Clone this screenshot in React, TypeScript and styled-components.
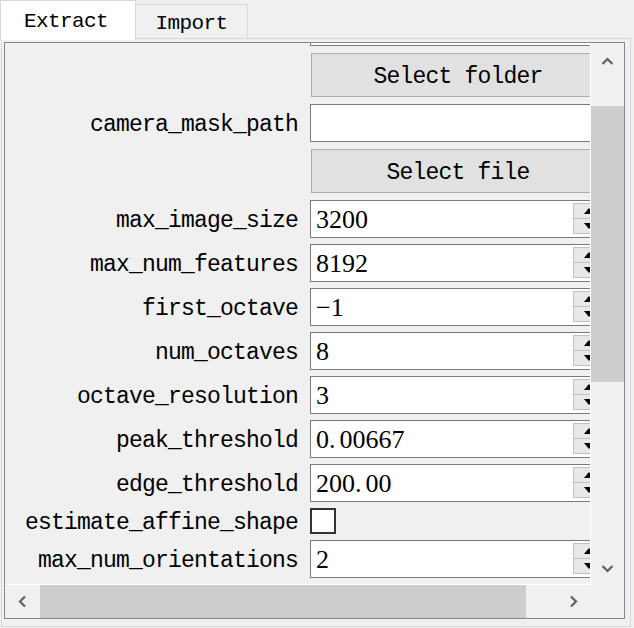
import React from 'react';
import styled, { createGlobalStyle } from 'styled-components';

type Row =
  | { kind: 'input'; label: string; value?: string }
  | { kind: 'button'; text: string }
  | { kind: 'spin'; label: string; value: string }
  | { kind: 'check'; label: string };

// the list is scrolled a little, so the first field sits mostly above the viewport
const rows: Row[] = [
  { kind: 'input', label: 'mask_path' },
  { kind: 'button', text: 'Select folder' },
  { kind: 'input', label: 'camera_mask_path' },
  { kind: 'button', text: 'Select file' },
  { kind: 'spin', label: 'max_image_size', value: '3200' },
  { kind: 'spin', label: 'max_num_features', value: '8192' },
  { kind: 'spin', label: 'first_octave', value: '\u22121' },
  { kind: 'spin', label: 'num_octaves', value: '8' },
  { kind: 'spin', label: 'octave_resolution', value: '3' },
  { kind: 'spin', label: 'peak_threshold', value: '0.00667' },
  { kind: 'spin', label: 'edge_threshold', value: '200.00' },
  { kind: 'check', label: 'estimate_affine_shape' },
  { kind: 'spin', label: 'max_num_orientations', value: '2' },
  { kind: 'check', label: 'upright' },
];

const GlobalStyle = createGlobalStyle`
  html, body {
    margin: 0;
    padding: 0;
    background: #f0f0f0;
  }
  body {
    font-family: "Liberation Mono", "DejaVu Sans Mono", monospace;
    color: #000;
  }
`;

const Window = styled.div`
  width: 634px;
  height: 628px;
  overflow: hidden;
  background: #f0f0f0;
`;

const TabBar = styled.div`
  display: flex;
  align-items: flex-start;
  height: 38px;
`;

const Tab = styled.div<{ $active?: boolean }>`
  position: relative;
  z-index: 1;
  box-sizing: border-box;
  display: flex;
  align-items: center;
  justify-content: center;
  font-family: "Liberation Mono", monospace;
  font-size: 21px;
  line-height: 22px;
  letter-spacing: -0.6px;
  white-space: nowrap;
  border: 1px solid #d9d9d9;
  ${({ $active }) =>
    $active
      ? `
    width: 136px;
    height: 40px;
    border-bottom: none;
    background: #ffffff;
    padding: 3px 4px 0 0;
  `
      : `
    width: 112px;
    height: 35px;
    margin-top: 4px;
    border-left: none;
    background: #f0f0f0;
    padding-top: 4px;
  `}
`;

const Pane = styled.div`
  box-sizing: border-box;
  margin-left: 1px;
  width: 630px;
  height: 589px;
  border: 1px solid #d9d9d9;
  background: #f0f0f0;
  padding: 3px 0 0 2px;
`;

const ScrollFrame = styled.div`
  box-sizing: border-box;
  width: 621px;
  height: 577px;
  border: 1px solid #828790;
  display: grid;
  grid-template-columns: 586px 33px;
  grid-template-rows: 542px 33px;
`;

const Viewport = styled.div`
  box-sizing: border-box;
  overflow: hidden;
  background: #f0f0f0;
  border-right: 1px solid #ffffff;
  border-bottom: 1px solid #ffffff;
`;

const Form = styled.div`
  display: grid;
  grid-template-columns: 273px 296px;
  column-gap: 12px;
  row-gap: 6px;
  padding-left: 20px;
  margin-top: -35px;
  width: max-content;
`;

const Label = styled.div`
  display: flex;
  align-items: center;
  justify-content: flex-end;
  white-space: nowrap;
  font-size: 23px;
  line-height: 20px;
  letter-spacing: -0.8px;
  padding-top: 3px;
`;

const LineEdit = styled.div`
  box-sizing: border-box;
  height: 38px;
  border: 1px solid #7a7a7a;
  background: #ffffff;
  display: flex;
  align-items: center;
  padding-left: 5px;
  font-family: "Liberation Serif", "Times New Roman", serif;
  font-size: 26px;
  line-height: 26px;
  white-space: nowrap;
`;

const ValueText = styled.span`
  padding-top: 2px;
`;

const Dot = styled.span`
  margin-right: 4px;
`;

const SpinButtons = styled.div`
  box-sizing: border-box;
  margin-left: auto;
  align-self: stretch;
  width: 32px;
  display: flex;
  flex-direction: column;
  padding: 2px 0 3px;
`;

const SpinButton = styled.div`
  flex: 1;
  border: 1px solid #c2c2c2;
  background: #e8e8e8;
  display: flex;
  align-items: center;
  justify-content: center;
  & + & {
    margin-top: -1px;
  }
`;

const PushButton = styled.div`
  box-sizing: border-box;
  margin: 1px;
  height: 44px;
  border: 1px solid #adadad;
  background: #e1e1e1;
  display: flex;
  align-items: center;
  justify-content: center;
  font-size: 23px;
  line-height: 20px;
  letter-spacing: -0.8px;
  padding-top: 3px;
  white-space: nowrap;
`;

const CheckCell = styled.div`
  display: flex;
  align-items: center;
`;

const CheckBox = styled.div`
  box-sizing: border-box;
  width: 26px;
  height: 26px;
  border: 2px solid #333333;
  background: #ffffff;
`;

const VScroll = styled.div`
  display: flex;
  flex-direction: column;
  background: #f0f0f0;
`;

const HScroll = styled.div`
  display: flex;
  background: #f0f0f0;
`;

const ArrowButton = styled.div<{ $long: number; $vertical?: boolean }>`
  flex: none;
  display: flex;
  align-items: center;
  justify-content: center;
  ${({ $long, $vertical }) => ($vertical ? `height: ${$long}px;` : `width: ${$long}px;`)}
`;

const Track = styled.div<{ $vertical?: boolean }>`
  flex: 1;
  display: flex;
  flex-direction: ${({ $vertical }) => ($vertical ? 'column' : 'row')};
`;

const Thumb = styled.div<{ $offset: number; $size: number; $vertical?: boolean }>`
  flex: none;
  background: #cdcdcd;
  ${({ $offset, $size, $vertical }) =>
    $vertical
      ? `margin-top: ${$offset}px; height: ${$size}px;`
      : `margin-left: ${$offset}px; width: ${$size}px;`}
`;

const Corner = styled.div`
  background: #f0f0f0;
`;

const Chevron = ({ dir }: { dir: 'up' | 'down' | 'left' | 'right' }) => {
  const rot = { up: 0, right: 90, down: 180, left: 270 }[dir];
  return (
    <svg width="13" height="13" viewBox="0 0 13 13" style={{ transform: `rotate(${rot}deg)` }}>
      <polyline points="1.5,9 6.5,4 11.5,9" fill="none" stroke="#606060" strokeWidth="2.2" />
    </svg>
  );
};

const Triangle = ({ up }: { up?: boolean }) => (
  <svg width="10" height="6" viewBox="0 0 10 6">
    <polygon points={up ? '0,6 5,0 10,6' : '0,0 10,0 5,6'} fill="#000" />
  </svg>
);

const Value = ({ text }: { text: string }) => {
  const parts = text.split('.');
  if (parts.length === 1) return <ValueText>{text}</ValueText>;
  return (
    <ValueText>
      {parts[0]}
      <Dot>.</Dot>
      {parts[1]}
    </ValueText>
  );
};

const FormRow = ({ row }: { row: Row }) => {
  if (row.kind === 'button') {
    return (
      <>
        <Label />
        <PushButton>{row.text}</PushButton>
      </>
    );
  }
  if (row.kind === 'check') {
    return (
      <>
        <Label>{row.label}</Label>
        <CheckCell>
          <CheckBox />
        </CheckCell>
      </>
    );
  }
  if (row.kind === 'spin') {
    return (
      <>
        <Label>{row.label}</Label>
        <LineEdit>
          <Value text={row.value} />
          <SpinButtons>
            <SpinButton>
              <Triangle up />
            </SpinButton>
            <SpinButton>
              <Triangle />
            </SpinButton>
          </SpinButtons>
        </LineEdit>
      </>
    );
  }
  return (
    <>
      <Label>{row.label}</Label>
      <LineEdit>{row.value}</LineEdit>
    </>
  );
};

export default function App() {
  return (
    <>
      <GlobalStyle />
      <Window>
        <TabBar>
          <Tab $active>Extract</Tab>
          <Tab>Import</Tab>
        </TabBar>
        <Pane>
          <ScrollFrame>
            <Viewport>
              <Form>
                {rows.map((row, i) => (
                  <FormRow key={i} row={row} />
                ))}
              </Form>
            </Viewport>
            <VScroll>
              <ArrowButton $vertical $long={36}>
                <Chevron dir="up" />
              </ArrowButton>
              <Track $vertical>
                <Thumb $vertical $offset={27} $size={276} />
              </Track>
              <ArrowButton $vertical $long={33}>
                <Chevron dir="down" />
              </ArrowButton>
            </VScroll>
            <HScroll>
              <ArrowButton $long={35}>
                <Chevron dir="left" />
              </ArrowButton>
              <Track>
                <Thumb $offset={0} $size={486} />
              </Track>
              <ArrowButton $long={35}>
                <Chevron dir="right" />
              </ArrowButton>
            </HScroll>
            <Corner />
          </ScrollFrame>
        </Pane>
      </Window>
    </>
  );
}
